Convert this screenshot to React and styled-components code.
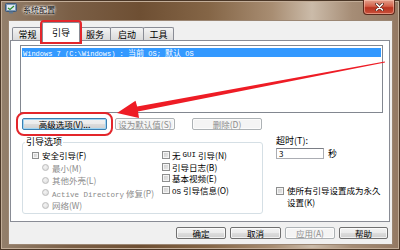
import React from "react";
import styled, { createGlobalStyle } from "styled-components";

const GlobalStyle = createGlobalStyle`
  html, body {
    margin: 0;
    padding: 0;
  }
  body {
    width: 400px;
    height: 250px;
    overflow: hidden;
    font-family: "Noto Sans CJK SC", "Liberation Sans", sans-serif;
  }
`;

const Window = styled.div`
  position: relative;
  width: 400px;
  height: 250px;
  box-sizing: border-box;
  display: flex;
  flex-direction: column;
  background: linear-gradient(90deg, #94806c 0%, #7a5e45 18%, #6e4f33 35%, #846546 52%, #a88d72 68%, #cbbba9 78%, #a68d76 88%, #937862 100%);
  box-shadow: inset 0 0 0 1px #4a3626, inset 0 0 0 2px #c2ad98;
`;

const TitleBar = styled.div`
  height: 20px;
  display: flex;
  align-items: flex-start;
  padding-left: 5px;
`;

const AppIcon = styled.svg`
  margin-top: 3px;
  flex: none;
`;

const Title = styled.span`
  align-self: center;
  margin-left: 4px;
  padding: 0 2px;
  font-size: 8px;
  line-height: 10px;
  color: #111;
  background: radial-gradient(ellipse at center, rgba(255, 255, 255, 0.55) 30%, rgba(255, 255, 255, 0) 75%);
  text-shadow: 0 0 2px #fff, 0 0 3px rgba(255, 255, 255, 0.9);
`;

const CloseButton = styled.div`
  margin-left: auto;
  margin-right: 5px;
  width: 32px;
  height: 15px;
  box-sizing: border-box;
  border: 1px solid #5b2a1c;
  border-top: none;
  border-radius: 0 0 4px 4px;
  background: linear-gradient(#e3a08c 0%, #d3614a 45%, #b83420 55%, #c9503a 100%);
  box-shadow: inset 0 0 0 1px rgba(255, 210, 190, 0.5);
  display: flex;
  align-items: center;
  justify-content: center;
`;

const Body = styled.div`
  flex: 1;
  margin: 0 7px 5px 8px;
  box-sizing: border-box;
  display: flex;
  flex-direction: column;
  background: #f0f0f0;
  border: 1px solid #9b8673;
  padding: 0 2px 5px 0;
`;

const TabRow = styled.div`
  display: flex;
  align-items: flex-end;
  height: 18px;
  margin: 1px 0 0 3px;
  position: relative;
  z-index: 2;
`;

const Tab = styled.div`
  box-sizing: border-box;
  width: ${(p) => p.$w}px;
  height: ${(p) => (p.$active ? 20 : 13)}px;
  margin-right: -1px;
  margin-bottom: ${(p) => (p.$active ? -2 : 0)}px;
  padding-top: ${(p) => (p.$active ? 4 : 1)}px;
  border: 1px solid #898c95;
  border-bottom: none;
  border-radius: 2px 2px 0 0;
  background: ${(p) => (p.$active ? "#fff" : "linear-gradient(#f4f4f4, #e6e6e6 50%, #dbdbdb)")};
  font-size: 9px;
  line-height: 11px;
  text-align: center;
  color: #000;
  position: relative;
  z-index: ${(p) => (p.$active ? 2 : 1)};
  outline: ${(p) => (p.$active ? "2px solid #e3262b" : "none")};
  outline-offset: 0;
`;

const Panel = styled.div`
  height: 182px;
  box-sizing: border-box;
  margin: 0 0 0 1px;
  border: 1px solid #898c95;
  background: #fff;
  display: flex;
  flex-direction: column;
  padding: 4px 6px 0 9px;
`;

const ListBox = styled.div`
  height: 68px;
  box-sizing: border-box;
  border: 1px solid #828790;
  padding: 2px 1px;
`;

const ListItem = styled.div`
  height: 9px;
  line-height: 9px;
  padding-left: 1px;
  background: #3399ff;
  color: #fff;
  font-family: "Liberation Mono", "Noto Sans CJK SC", monospace;
  font-size: 7px;
  white-space: nowrap;
`;

const Han = styled.span`
  font-family: "Noto Sans CJK SC", sans-serif;
  font-size: 8px;
`;

const ButtonRow = styled.div`
  display: flex;
  margin: 5px 0 0 2px;
`;

const Button = styled.div`
  box-sizing: border-box;
  width: ${(p) => p.$w}px;
  height: 12px;
  margin-left: ${(p) => p.$ml || 0}px;
  border: 1px solid ${(p) => (p.$disabled ? "#adb2b5" : p.$default ? "#3c7fb1" : "#707070")};
  border-radius: 2px;
  background: ${(p) =>
    p.$disabled ? "#f4f4f4" : "linear-gradient(#f2f2f2 0%, #ebebeb 50%, #dddddd 51%, #cfcfcf 100%)"};
  box-shadow: ${(p) => (p.$default ? "inset 0 0 0 1px #9fd5f3" : "inset 0 0 0 1px rgba(255,255,255,0.7)")};
  color: ${(p) => (p.$disabled ? "#8d8d8d" : "#000")};
  font-size: 8.5px;
  line-height: 10px;
  text-align: center;
  white-space: nowrap;
  outline: ${(p) => (p.$mark ? "2px solid #e3262b" : "none")};
  outline-offset: 4px;
`;

const Lower = styled.div`
  display: flex;
  margin: 7px 0 0 2px;
`;

const Group = styled.fieldset`
  width: 241px;
  height: 77px;
  box-sizing: border-box;
  margin: 0;
  padding: 2px 0 0 2px;
  border: 1px solid #d5dfe5;
  border-radius: 3px;
`;

const Legend = styled.legend`
  font-size: 9px;
  line-height: 10px;
  padding: 0 1px;
  color: #000;
`;

const OptionGrid = styled.div`
  display: grid;
  grid-template-columns: 130px 1fr;
  margin-left: 7px;
`;

const Column = styled.div`
  display: flex;
  flex-direction: column;
`;

const Option = styled.div`
  display: flex;
  align-items: center;
  height: ${(p) => p.$h}px;
  gap: ${(p) => p.$gap || 3}px;
  margin-left: ${(p) => p.$indent || 0}px;
  font-size: 8.5px;
  color: ${(p) => (p.$disabled ? "#8a8a8a" : "#000")};
  white-space: nowrap;
`;

const Mono = styled.span`
  font-family: "Liberation Mono", "Noto Sans CJK SC", monospace;
  font-size: 7.5px;
`;

const Check = styled.span`
  flex: none;
  width: ${(p) => p.$s || 7}px;
  height: ${(p) => p.$s || 7}px;
  box-sizing: border-box;
  border: 1px solid #8e8f8f;
  background: linear-gradient(135deg, #cbcbcb, #ececec);
  box-shadow: inset 0 0 0 1px #f4f4f4;
`;

const Radio = styled.span`
  flex: none;
  width: 7px;
  height: 7px;
  box-sizing: border-box;
  border-radius: 50%;
  border: 1px solid #bcbcbc;
  background: radial-gradient(circle at 40% 40%, #f4f4f4, #d8d8d8);
`;

const Side = styled.div`
  margin-left: 13px;
  display: flex;
  flex-direction: column;
  font-size: 9px;
  color: #000;
`;

const Label = styled.div`
  line-height: 10px;
  margin-top: -1px;
`;

const InputRow = styled.div`
  display: flex;
  align-items: center;
  margin-top: 1px;
`;

const TextBox = styled.div`
  width: 48px;
  height: 11px;
  box-sizing: border-box;
  border: 1px solid #abadb3;
  border-top-color: #7a7d85;
  padding-left: 2px;
  font-size: 8px;
  line-height: 9px;
`;

const Unit = styled.span`
  margin-left: 4px;
  font-size: 9px;
`;

const PermRow = styled.div`
  display: flex;
  align-items: flex-start;
  gap: 3px;
  margin-top: 25px;
`;

const PermText = styled.div`
  font-size: 8.5px;
  line-height: 12px;
  white-space: pre-line;
  margin-top: -1px;
`;

const Footer = styled.div`
  display: flex;
  justify-content: flex-end;
  gap: 4px;
  margin-top: 5px;
  padding-right: 2px;
`;

const Overlay = styled.svg`
  position: absolute;
  left: 0;
  top: 0;
  pointer-events: none;
`;

const App = () => {
  return (
    <>
      <GlobalStyle />
      <Window>
        <TitleBar>
          <AppIcon width="12" height="11" viewBox="0 0 12 11">
            <rect x="0.5" y="0.5" width="11" height="8" rx="1" fill="#7d9ab8" stroke="#3d5878" />
            <rect x="2" y="2" width="8" height="5" fill="#dfe9f3" />
            <rect x="4" y="8.5" width="4" height="2" fill="#5f7893" />
            <path d="M3 5 L5 6.5 L9 3" stroke="#2f8a2f" strokeWidth="1.2" fill="none" />
          </AppIcon>
          <Title>系统配置</Title>
          <CloseButton>
            <svg width="9" height="8" viewBox="0 0 9 8">
              <path d="M1.5 1 L7.5 7 M7.5 1 L1.5 7" stroke="#5a2418" strokeWidth="3" strokeLinecap="round" />
              <path d="M1.5 1 L7.5 7 M7.5 1 L1.5 7" stroke="#fff" strokeWidth="1.6" strokeLinecap="round" />
            </svg>
          </CloseButton>
        </TitleBar>
        <Body>
          <TabRow>
            <Tab $w={31}>常规</Tab>
            <Tab $w={38} $active>引导</Tab>
            <Tab $w={32}>服务</Tab>
            <Tab $w={34}>启动</Tab>
            <Tab $w={31}>工具</Tab>
          </TabRow>
          <Panel>
            <ListBox>
              <ListItem>
                Windows 7 (C:\Windows) : <Han>当前</Han> OS; <Han>默认</Han> OS
              </ListItem>
            </ListBox>
            <ButtonRow>
              <Button $w={85} $default $mark>高级选项(V)...</Button>
              <Button $w={60} $ml={8} $disabled>设为默认值(S)</Button>
              <Button $w={70} $ml={17} $disabled>删除(D)</Button>
            </ButtonRow>
            <Lower>
              <Group>
                <Legend>引导选项</Legend>
                <OptionGrid>
                  <Column>
                    <Option $h={12.5}><Check />安全引导(F)</Option>
                    <Option $h={12.5} $indent={10} $disabled><Radio />最小(M)</Option>
                    <Option $h={12.5} $indent={10} $disabled><Radio />其他外壳(L)</Option>
                    <Option $h={12.5} $indent={10} $disabled><Radio /><span><Mono>Active Directory</Mono> 修复(P)</span></Option>
                    <Option $h={12.5} $indent={10} $disabled><Radio />网络(W)</Option>
                  </Column>
                  <Column>
                    <Option $h={11.7} $gap={2}><Check $s={8} />无 <Mono>GUI</Mono> 引导(N)</Option>
                    <Option $h={11.7} $gap={2}><Check $s={8} />引导日志(B)</Option>
                    <Option $h={11.7} $gap={2}><Check $s={8} />基本视频(E)</Option>
                    <Option $h={11.7} $gap={2}><Check $s={8} /><span><Mono>OS</Mono> 引导信息(O)</span></Option>
                  </Column>
                </OptionGrid>
              </Group>
              <Side>
                <Label>超时(T):</Label>
                <InputRow>
                  <TextBox>3</TextBox>
                  <Unit>秒</Unit>
                </InputRow>
                <PermRow>
                  <Check $s={8} style={{ marginTop: 2 }} />
                  <PermText>{"使所有引导设置成为永久\n设置(K)"}</PermText>
                </PermRow>
              </Side>
            </Lower>
          </Panel>
          <Footer>
            <Button $w={50}>确定</Button>
            <Button $w={51}>取消</Button>
            <Button $w={50} $disabled>应用(A)</Button>
            <Button $w={49}>帮助</Button>
          </Footer>
        </Body>
        <Overlay width="400" height="250" viewBox="0 0 400 250">
          <polygon
            points="117,113 139,118 138,111.6 385,62.6 384.8,61.4 137.2,106.6 135.5,100.8"
            fill="#ee1c25"
          />
        </Overlay>
      </Window>
    </>
  );
};

export default App;
